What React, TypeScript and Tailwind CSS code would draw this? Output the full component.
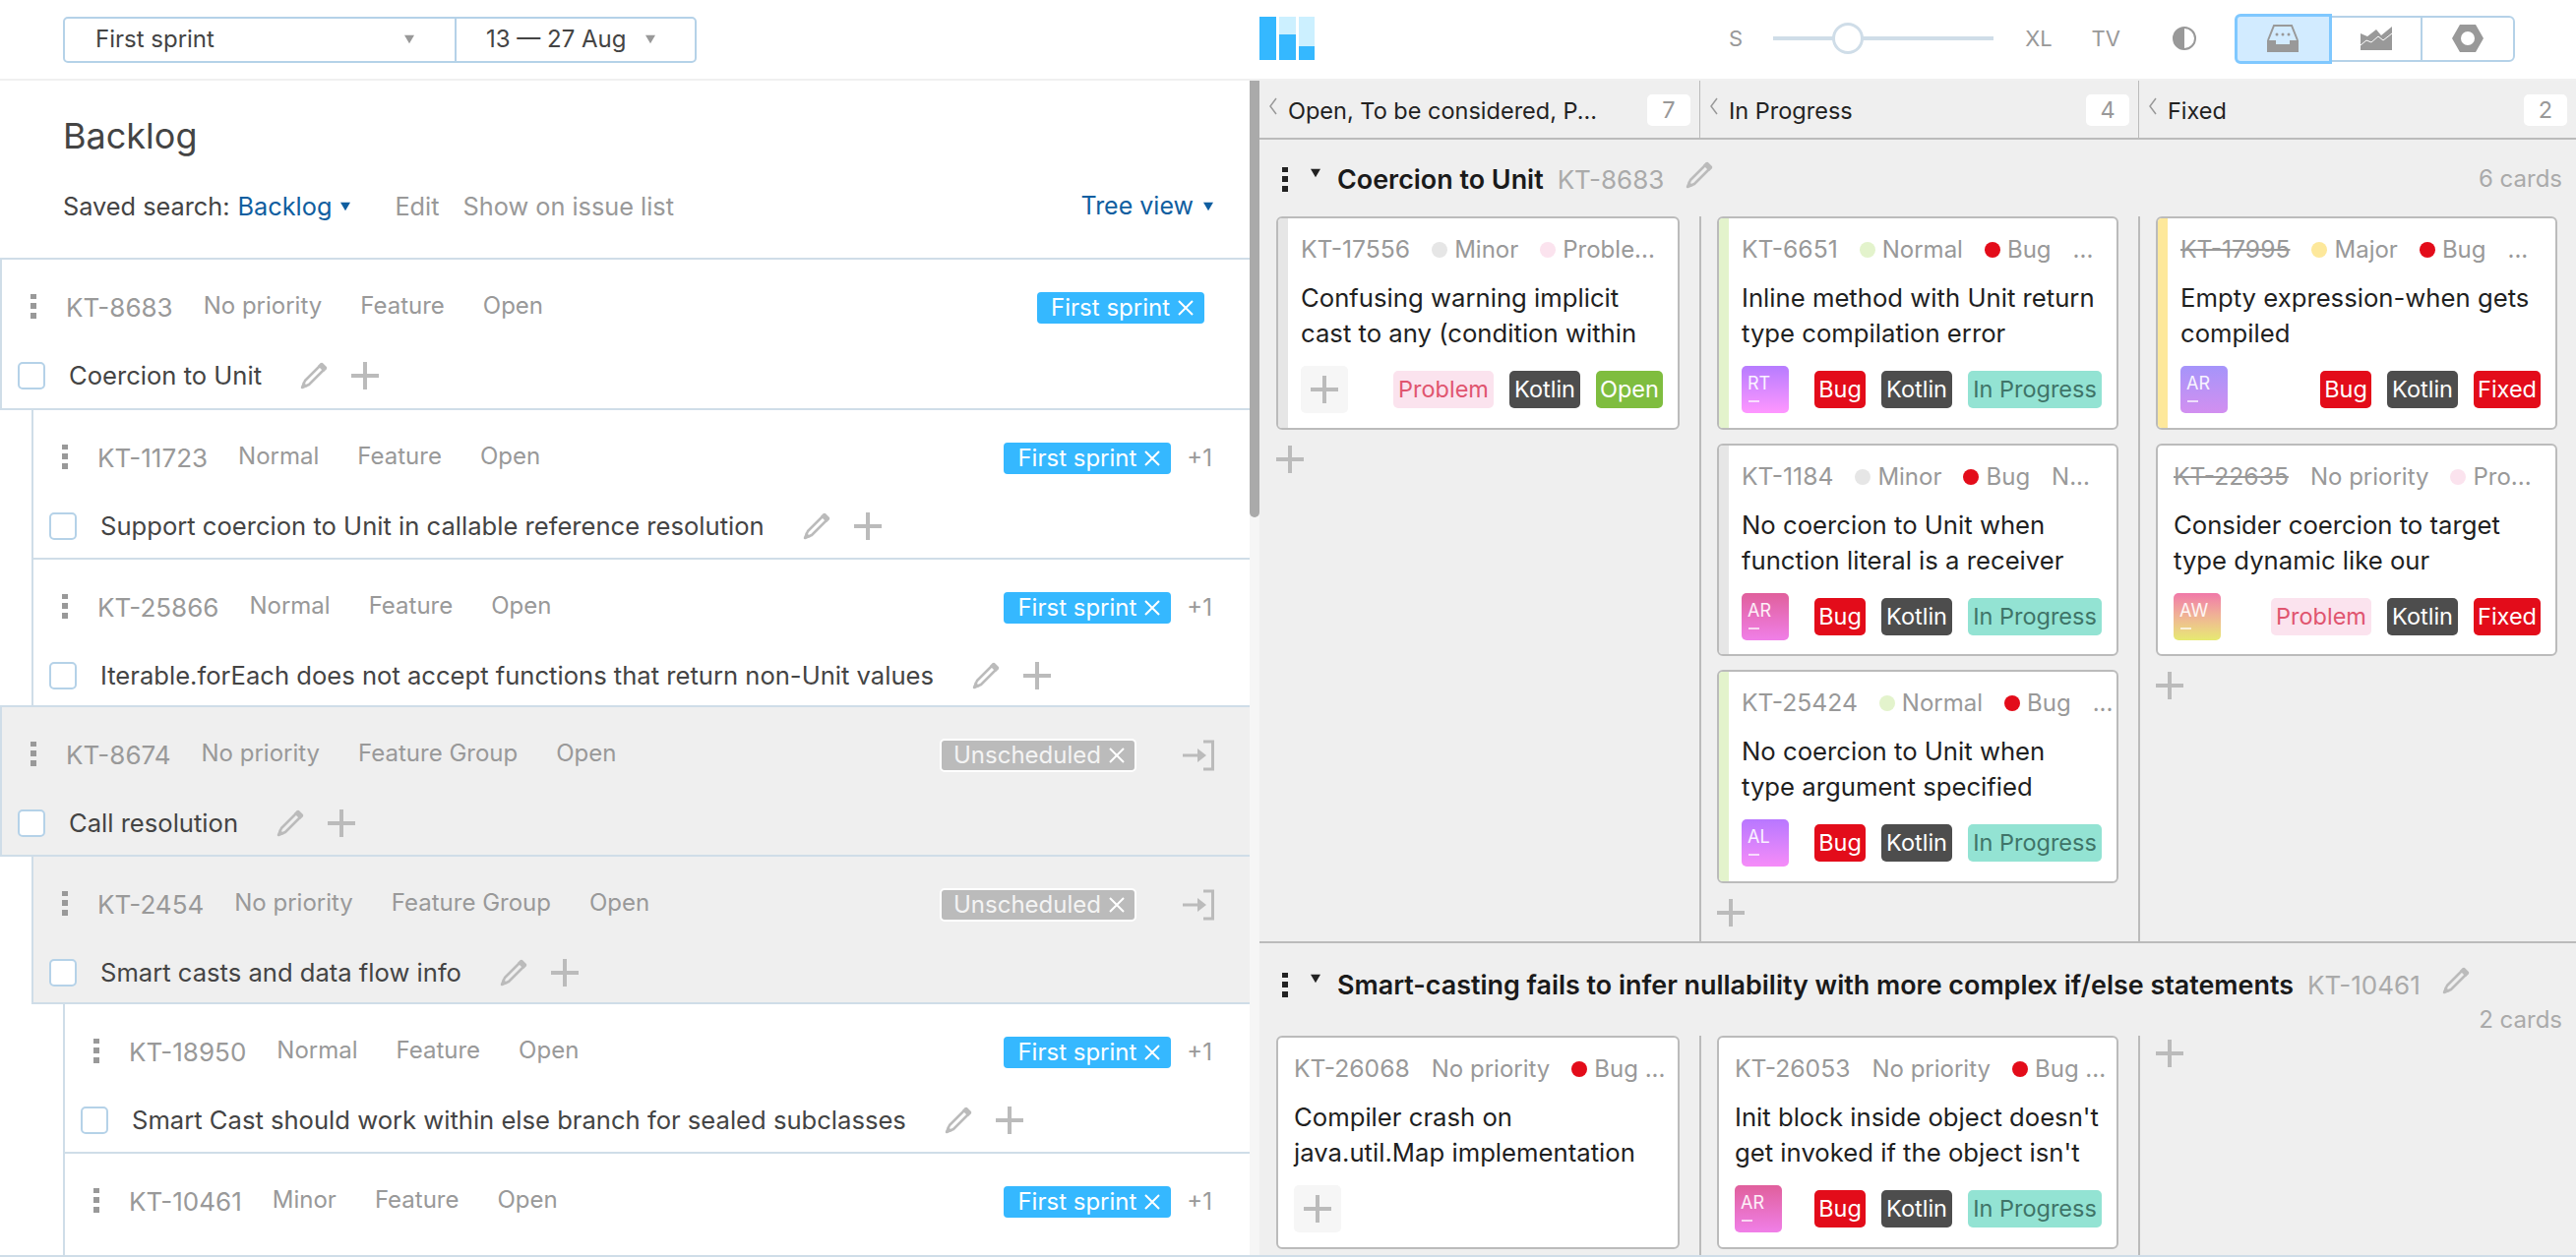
import type { ReactNode } from 'react';

function Caret({ className }: { className: string }) {
  return (
    <svg viewBox="0 0 12 12" className={className}>
      <path d="M0 1 H12 L6 11 Z" fill="currentColor" />
    </svg>
  );
}

function Kebab({ className }: { className: string }) {
  return (
    <div className={`flex flex-col gap-[4px] ${className}`}>
      <span className="block h-[5px] w-[6px] bg-current" />
      <span className="block h-[6px] w-[6px] bg-current" />
      <span className="block h-[6px] w-[6px] bg-current" />
    </div>
  );
}

function Pencil({ className }: { className: string }) {
  return (
    <svg viewBox="0 0 28 28" className={className}>
      <path d="M22 2 L26 6 L9 23 L2 26 L5 19 Z" fill="none" stroke="#bbb" strokeWidth="2.5" strokeLinejoin="round" />
      <path d="M21 1 L27 7 L24 10 L18 4 Z" fill="#bbb" />
      <path d="M1 27 L3 20 L8 25 Z" fill="#bbb" />
    </svg>
  );
}

function Plus({ className }: { className: string }) {
  return (
    <svg viewBox="0 0 28 28" className={className}>
      <path d="M12 0 H16 V12 H28 V16 H16 V28 H12 V16 H0 V12 H12 Z" fill="#bbb" />
    </svg>
  );
}

function Cross() {
  return (
    <svg viewBox="0 0 16 16" className="ml-[8px] h-[16px] w-[16px]">
      <path d="M1 1 L15 15 M15 1 L1 15" stroke="#fff" strokeWidth="2" />
    </svg>
  );
}

function ExitIcon() {
  return (
    <svg viewBox="0 0 32 32" className="h-[32px] w-[32px]">
      <path d="M0 16 H16" stroke="#bbb" strokeWidth="3" />
      <path d="M15 9 L24 16 L15 23 Z" fill="#bbb" />
      <path d="M21 2 H30.5 V30 H21" stroke="#bbb" strokeWidth="3" fill="none" />
    </svg>
  );
}

type Row = {
  id: string;
  priority: string;
  type: string;
  title: string;
  height: string;
  indent: string;
  gray?: boolean;
  sprint?: boolean;
  extra?: boolean;
};

const rows: Row[] = [
  { id: 'KT-8683', priority: 'No priority', type: 'Feature', title: 'Coercion to Unit', height: 'h-[155px]', indent: 'ml-0', sprint: true },
  { id: 'KT-11723', priority: 'Normal', type: 'Feature', title: 'Support coercion to Unit in callable reference resolution', height: 'h-[154px]', indent: 'ml-[32px]', sprint: true, extra: true },
  { id: 'KT-25866', priority: 'Normal', type: 'Feature', title: 'Iterable.forEach does not accept functions that return non-Unit values', height: 'h-[152px]', indent: 'ml-[32px]', sprint: true, extra: true },
  { id: 'KT-8674', priority: 'No priority', type: 'Feature Group', title: 'Call resolution', height: 'h-[154px]', indent: 'ml-0', gray: true },
  { id: 'KT-2454', priority: 'No priority', type: 'Feature Group', title: 'Smart casts and data flow info', height: 'h-[152px]', indent: 'ml-[32px]', gray: true },
  { id: 'KT-18950', priority: 'Normal', type: 'Feature', title: 'Smart Cast should work within else branch for sealed subclasses', height: 'h-[154px]', indent: 'ml-[64px]', sprint: true, extra: true },
  { id: 'KT-10461', priority: 'Minor', type: 'Feature', title: '', height: 'h-[154px]', indent: 'ml-[64px]', sprint: true, extra: true },
];

function BacklogRow({ row }: { row: Row }) {
  return (
    <div className={`-mb-[2px] shrink-0 border-2 border-r-0 border-[#cfdde8] ${row.height} ${row.indent} ${row.gray ? 'bg-[#efefef]' : 'bg-white'}`}>
      <div className="flex h-[94px] items-center pl-[29px] text-[24px] text-[#999]">
        <Kebab className="mr-[30px] text-[#999]" />
        <span className="mt-[2px] text-[26px]">{row.id}</span>
        <span className="ml-[31px]">{row.priority}</span>
        <span className="ml-[39px]">{row.type}</span>
        <span className="ml-[39px]">Open</span>
        {row.sprint && (
          <div className={`ml-auto mt-[4px] flex items-center ${row.extra ? 'mr-[38px]' : 'mr-[46px]'}`}>
            <span className="flex h-[32px] items-center rounded-[4px] bg-[#35b8ff] pl-[14px] pr-[11px] text-white">
              First sprint
              <Cross />
            </span>
            {row.extra && <span className="ml-[16px]">+1</span>}
          </div>
        )}
        {row.gray && (
          <div className="ml-auto mr-[36px] mt-[3px] flex items-center">
            <span className="flex h-[34px] items-center rounded-[5px] border-2 border-white bg-[#bbb] pl-[12px] pr-[10px] text-[#f4f4f4]">
              Unscheduled
              <Cross />
            </span>
            <span className="ml-[47px]">
              <ExitIcon />
            </span>
          </div>
        )}
      </div>
      <div className="flex h-[48px] items-center pl-[16px] text-[25.6px] text-[#444]">
        <span className="h-[28px] w-[28px] shrink-0 rounded-[5px] border-2 border-[#b5d2e8] bg-white" />
        <span className="ml-[24px]">{row.title}</span>
        {row.title && (
          <>
            <Pencil className="ml-[39px] h-[28px] w-[28px]" />
            <Plus className="ml-[24px] h-[28px] w-[28px]" />
          </>
        )}
      </div>
    </div>
  );
}

function BacklogPanel() {
  return (
    <div className="flex min-h-0 flex-1">
      <div className="flex w-[1270px] flex-col overflow-hidden">
        <h1 className="ml-[64px] mt-[32px] text-[36px] leading-[48px] text-[#444]">Backlog</h1>
        <div className="mb-[34px] mt-[30px] flex h-[36px] items-center pl-[64px] pr-[36px] text-[25.3px] text-[#999]">
          <span className="text-[#444]">Saved search:</span>
          <span className="ml-[8px] text-[#0f5ea0]">Backlog</span>
          <Caret className="ml-[8px] h-[10px] w-[12px] text-[#0f5ea0]" />
          <span className="ml-[44px]">Edit</span>
          <span className="ml-[24px]">Show on issue list</span>
          <span className="ml-auto text-[25px] text-[#0f5ea0]">Tree view</span>
          <Caret className="ml-[9px] h-[10px] w-[12px] text-[#0f5ea0]" />
        </div>
        {rows.map((row) => (
          <BacklogRow key={row.id} row={row} />
        ))}
      </div>
      <div className="w-[10px] bg-[#f6f6f6]">
        <div className="h-[444px] rounded-b-[5px] bg-[#aaa]" />
      </div>
    </div>
  );
}

type Meta = { text: string; dot?: string };
type CardData = {
  id: string;
  done?: boolean;
  strip?: string;
  meta: Meta[];
  lines: string[];
  avatar?: { text: string; bg: string };
  tags: string[];
};

const tagStyles: Record<string, string> = {
  Problem: 'w-[102px] bg-[#fbe3ee] text-[#e0556f]',
  Kotlin: 'w-[72px] bg-[#4d4d4d] text-white',
  Open: 'w-[68px] bg-[#7fbd3f] text-white',
  Bug: 'w-[52px] bg-[#e30c1a] text-white',
  Fixed: 'w-[68px] bg-[#e30c1a] text-white',
  'In Progress': 'w-[136px] bg-[#93e3d3] text-[#3f7468]',
};

const minor = '#e6e6e6';
const bug = '#e30c1a';
const problem = '#fbe3ee';

const arPink = 'bg-gradient-to-b from-[#e05f9c] to-[#f07fe8]';

const lane1: CardData[][] = [
  [
    {
      id: 'KT-17556',
      strip: 'bg-[#e6e6e6]',
      meta: [{ text: 'Minor', dot: minor }, { text: 'Proble...', dot: problem }],
      lines: ['Confusing warning implicit', 'cast to any (condition within'],
      tags: ['Problem', 'Kotlin', 'Open'],
    },
  ],
  [
    {
      id: 'KT-6651',
      strip: 'bg-[#e3f3cc]',
      meta: [{ text: 'Normal', dot: '#e3f3cc' }, { text: 'Bug', dot: bug }, { text: '...' }],
      lines: ['Inline method with Unit return', 'type compilation error'],
      avatar: { text: 'RT', bg: 'bg-gradient-to-b from-[#b77cff] to-[#ff96ff]' },
      tags: ['Bug', 'Kotlin', 'In Progress'],
    },
    {
      id: 'KT-1184',
      strip: 'bg-[#e6e6e6]',
      meta: [{ text: 'Minor', dot: minor }, { text: 'Bug', dot: bug }, { text: 'N...' }],
      lines: ['No coercion to Unit when', 'function literal is a receiver'],
      avatar: { text: 'AR', bg: arPink },
      tags: ['Bug', 'Kotlin', 'In Progress'],
    },
    {
      id: 'KT-25424',
      strip: 'bg-[#e3f3cc]',
      meta: [{ text: 'Normal', dot: '#e3f3cc' }, { text: 'Bug', dot: bug }, { text: '...' }],
      lines: ['No coercion to Unit when', 'type argument specified'],
      avatar: { text: 'AL', bg: 'bg-gradient-to-b from-[#b877ff] to-[#f68cf8]' },
      tags: ['Bug', 'Kotlin', 'In Progress'],
    },
  ],
  [
    {
      id: 'KT-17995',
      done: true,
      strip: 'bg-[#fde89b]',
      meta: [{ text: 'Major', dot: '#fde89b' }, { text: 'Bug', dot: bug }, { text: '...' }],
      lines: ['Empty expression-when gets', 'compiled'],
      avatar: { text: 'AR', bg: 'bg-gradient-to-b from-[#a594fa] to-[#d28ff0]' },
      tags: ['Bug', 'Kotlin', 'Fixed'],
    },
    {
      id: 'KT-22635',
      done: true,
      meta: [{ text: 'No priority' }, { text: 'Pro...', dot: problem }],
      lines: ['Consider coercion to target', 'type dynamic like our'],
      avatar: { text: 'AW', bg: 'bg-gradient-to-b from-[#f078a8] to-[#e6ea70]' },
      tags: ['Problem', 'Kotlin', 'Fixed'],
    },
  ],
];

const lane2: CardData[][] = [
  [
    {
      id: 'KT-26068',
      meta: [{ text: 'No priority' }, { text: 'Bug ...', dot: bug }],
      lines: ['Compiler crash on', 'java.util.Map implementation'],
      tags: [],
    },
  ],
  [
    {
      id: 'KT-26053',
      meta: [{ text: 'No priority' }, { text: 'Bug ...', dot: bug }],
      lines: ['Init block inside object doesn\'t', 'get invoked if the object isn\'t'],
      avatar: { text: 'AR', bg: arPink },
      tags: ['Bug', 'Kotlin', 'In Progress'],
    },
  ],
  [],
];

function Card({ card }: { card: CardData }) {
  return (
    <div className="flex h-[216.5px] shrink-0 overflow-hidden rounded-[6px] border-2 border-[#bbb] bg-white">
      {card.strip && <div className={`w-[10px] shrink-0 ${card.strip}`} />}
      <div className={`min-w-0 flex-1 pr-[15px] pt-[17px] ${card.strip ? 'pl-[13px]' : 'pl-[16px]'}`}>
        <div className="flex h-[30px] items-center gap-[22px] whitespace-nowrap text-[24px] text-[#999]">
          <span className={`text-[24.7px] ${card.done ? 'line-through' : ''}`}>{card.id}</span>
          {card.meta.map((m) => (
            <span key={m.text} className="flex items-center gap-[7px]">
              {m.dot && <span className="h-[16px] w-[16px] rounded-full" style={{ backgroundColor: m.dot }} />}
              {m.text}
            </span>
          ))}
        </div>
        <div className="mt-[16px] h-[72px] whitespace-nowrap text-[25.7px] leading-[36px] text-[#1f1f1f]">
          {card.lines.map((l) => (
            <div key={l}>{l}</div>
          ))}
        </div>
        <div className="mt-[15px] flex h-[48px] items-center">
          {card.avatar ? (
            <div className={`relative h-[48px] w-[48px] rounded-[5px] pl-[6px] pt-[6px] text-[18px] leading-[24px] text-white/90 ${card.avatar.bg}`}>
              {card.avatar.text}
              <span className="absolute left-[7px] top-[35px] h-[2px] w-[11px] bg-white/70" />
            </div>
          ) : (
            <div className="flex h-[48px] w-[48px] items-center justify-center rounded-[5px] bg-[#f6f6f6]">
              <Plus className="h-[28px] w-[28px]" />
            </div>
          )}
          <div className="ml-auto flex gap-[16px]">
            {card.tags.map((t) => (
              <span key={t} className={`flex h-[38px] items-center justify-center rounded-[5px] text-[23.5px] ${tagStyles[t]}`}>
                {t}
              </span>
            ))}
          </div>
        </div>
      </div>
    </div>
  );
}

const columnClasses = [
  'w-[447px] pl-[17px] pr-[20px]',
  'w-[446px] border-l-2 border-[#bbb] pl-[16px] pr-[20px]',
  'w-[445px] border-l-2 border-[#bbb] pl-[16px] pr-[19px]',
];

function Column({ cards, index, showAdd }: { cards: CardData[]; index: number; showAdd: boolean }) {
  return (
    <div className={`flex shrink-0 flex-col gap-[14px] ${columnClasses[index]}`}>
      {cards.map((c) => (
        <Card key={c.id} card={c} />
      ))}
      {showAdd && <Plus className={`h-[28px] w-[28px] shrink-0 ${cards.length ? 'mt-[2px]' : 'mt-[4px]'}`} />}
    </div>
  );
}

function LaneHeader({ title, id, cards, children }: { title: string; id: string; cards: string; children?: ReactNode }) {
  return (
    <div className="flex items-center pl-[23px] pr-[14px]">
      <Kebab className="mr-[22px] text-[#222]" />
      <Caret className="mr-[16px] h-[10px] w-[12px] -translate-y-[6px] text-[#222]" />
      <span className="text-[26.9px] font-semibold text-[#1a1a1a]">{title}</span>
      <span className="ml-[14px] text-[26px] text-[#aaa]">{id}</span>
      <Pencil className="ml-[22px] h-[28px] w-[28px] -translate-y-[4px]" />
      {children}
      <span className="ml-auto text-[24px] text-[#aaa]">{cards}</span>
    </div>
  );
}

const headers = [
  { label: 'Open, To be considered, P...', count: 7, width: 'w-[447px]' },
  { label: 'In Progress', count: 4, width: 'w-[446px]' },
  { label: 'Fixed', count: 2, width: 'w-[445px]' },
];

function BoardPanel() {
  return (
    <div className="flex w-[1338px] flex-col overflow-hidden bg-[#efefef]">
      <div className="flex h-[60px] shrink-0 border-b-2 border-[#bbb]">
        {headers.map((h, i) => (
          <div key={h.label} className={`flex items-center pl-[9px] pr-[9px] pt-[3px] text-[23.5px] text-[#222] ${h.width} ${i > 0 ? 'border-l border-[#bbb]' : ''}`}>
            <svg viewBox="0 0 10 18" className="mr-[10px] h-[18px] w-[10px] -translate-y-[5px]">
              <path d="M8 1 L2 9 L8 17" fill="none" stroke="#999" strokeWidth="1.5" />
            </svg>
            {h.label}
            <span className="ml-auto flex h-[32px] w-[44px] -translate-y-[1px] items-center justify-center rounded-[5px] bg-white text-[#999]">{h.count}</span>
          </div>
        ))}
      </div>
      <div className="flex h-[817px] shrink-0 flex-col border-b-2 border-[#bbb]">
        <div className="h-[78px] pt-[20px]">
          <LaneHeader title="Coercion to Unit" id="KT-8683" cards="6 cards" />
        </div>
        <div className="flex flex-1">
          {lane1.map((cards, i) => (
            <Column key={i} cards={cards} index={i} showAdd />
          ))}
        </div>
      </div>
      <div className="flex min-h-0 flex-1 flex-col">
        <div className="h-[94px] pt-[22px]">
          <LaneHeader title="Smart-casting fails to infer nullability with more complex if/else statements" id="KT-10461" cards="" />
          <div className="-mt-[2px] pr-[14px] text-right text-[24px] text-[#aaa]">2 cards</div>
        </div>
        <div className="flex flex-1">
          {lane2.map((cards, i) => (
            <Column key={i} cards={cards} index={i} showAdd={i === 2} />
          ))}
        </div>
      </div>
    </div>
  );
}

function TopBar() {
  return (
    <div className="flex h-[82px] shrink-0 border-b-2 border-[#f0f0f0] bg-white text-[#999]">
      <div className="flex w-[1280px] items-center pl-[64px]">
        <div className="flex h-[47px] w-[644px] rounded-[5px] border-2 border-[#b5d2e8] text-[24px] text-[#444]">
          <div className="flex w-[398px] items-center border-r-2 border-[#b5d2e8] pl-[31px]">
            First sprint
            <Caret className="ml-auto mr-[40px] h-[10px] w-[12px] text-[#999]" />
          </div>
          <div className="flex flex-1 items-center pl-[30px]">
            13 — 27 Aug
            <Caret className="ml-[18px] h-[10px] w-[12px] text-[#999]" />
          </div>
        </div>
      </div>
      <div className="flex flex-1 items-center pb-[2px] text-[22px]">
        <div className="flex h-[44px] w-[56px] gap-[3px]">
          <div className="w-[17px] bg-[#35b8ff]" />
          <div className="flex w-[17px] flex-col justify-end bg-[#ccf0ff]">
            <div className="h-[26px] bg-[#35b8ff]" />
          </div>
          <div className="flex w-[16px] flex-col justify-end bg-[#ccf0ff]">
            <div className="h-[14px] bg-[#35b8ff]" />
          </div>
        </div>
        <span className="ml-[421px]">S</span>
        <div className="relative ml-[31px] h-[4px] w-[224px] bg-[#cfdde8]">
          <span className="absolute -top-[14px] left-[60px] h-[32px] w-[32px] rounded-full border-[3px] border-[#cfdde8] bg-white" />
        </div>
        <span className="ml-[32px]">XL</span>
        <span className="ml-[40px]">TV</span>
        <svg viewBox="0 0 24 24" className="ml-[53px] h-[24px] w-[24px]">
          <circle cx="12" cy="12" r="11" fill="none" stroke="#999" strokeWidth="2" />
          <path d="M12 1 A11 11 0 0 0 12 23 Z" fill="#999" />
        </svg>
        <div className="ml-[39px] flex h-[47px] w-[285px] rounded-[6px] border-2 border-[#b5d2e8]">
          <div className="-my-[4px] -ml-[2px] flex w-[99px] items-center justify-center rounded-l-[6px] border-[3px] border-[#7fc8ff] bg-[#d2ebff]">
            <svg viewBox="0 0 32 28" className="h-[28px] w-[32px]">
              <path d="M1 16 L7 1 H25 L31 16" fill="none" stroke="#999" strokeWidth="2" />
              <circle cx="10" cy="10" r="1.5" fill="#999" />
              <circle cx="16" cy="10" r="1.5" fill="#999" />
              <circle cx="22" cy="10" r="1.5" fill="#999" />
              <path d="M0 16 H9 V20 H23 V16 H32 V28 H0 Z" fill="#999" />
            </svg>
          </div>
          <div className="flex w-[92px] items-center justify-center border-r-2 border-[#b5d2e8]">
            <svg viewBox="0 0 32 24" className="h-[24px] w-[32px]">
              <path d="M0 7 L7 10 L16 3 L21 9 L32 0 V24 H0 Z" fill="#999" />
              <path d="M0 19 L6 14 L11 16 L18 10 L23 14 L32 7" fill="none" stroke="#fff" strokeWidth="1" />
            </svg>
          </div>
          <div className="flex flex-1 items-center justify-center">
            <svg viewBox="0 0 32 28" className="h-[28px] w-[32px]">
              <path fillRule="evenodd" d="M0 14 L8 0 H24 L32 14 L24 28 H8 Z M16 7 A7 7 0 1 0 16 21 A7 7 0 1 0 16 7 Z" fill="#999" />
            </svg>
          </div>
        </div>
      </div>
    </div>
  );
}

export default function App() {
  return (
    <div className="flex h-[1278px] w-[2618px] flex-col overflow-hidden border-b-2 border-[#cfdde8] bg-white font-[Inter,sans-serif]">
      <TopBar />
      <div className="flex min-h-0 flex-1">
        <BacklogPanel />
        <BoardPanel />
      </div>
    </div>
  );
}
